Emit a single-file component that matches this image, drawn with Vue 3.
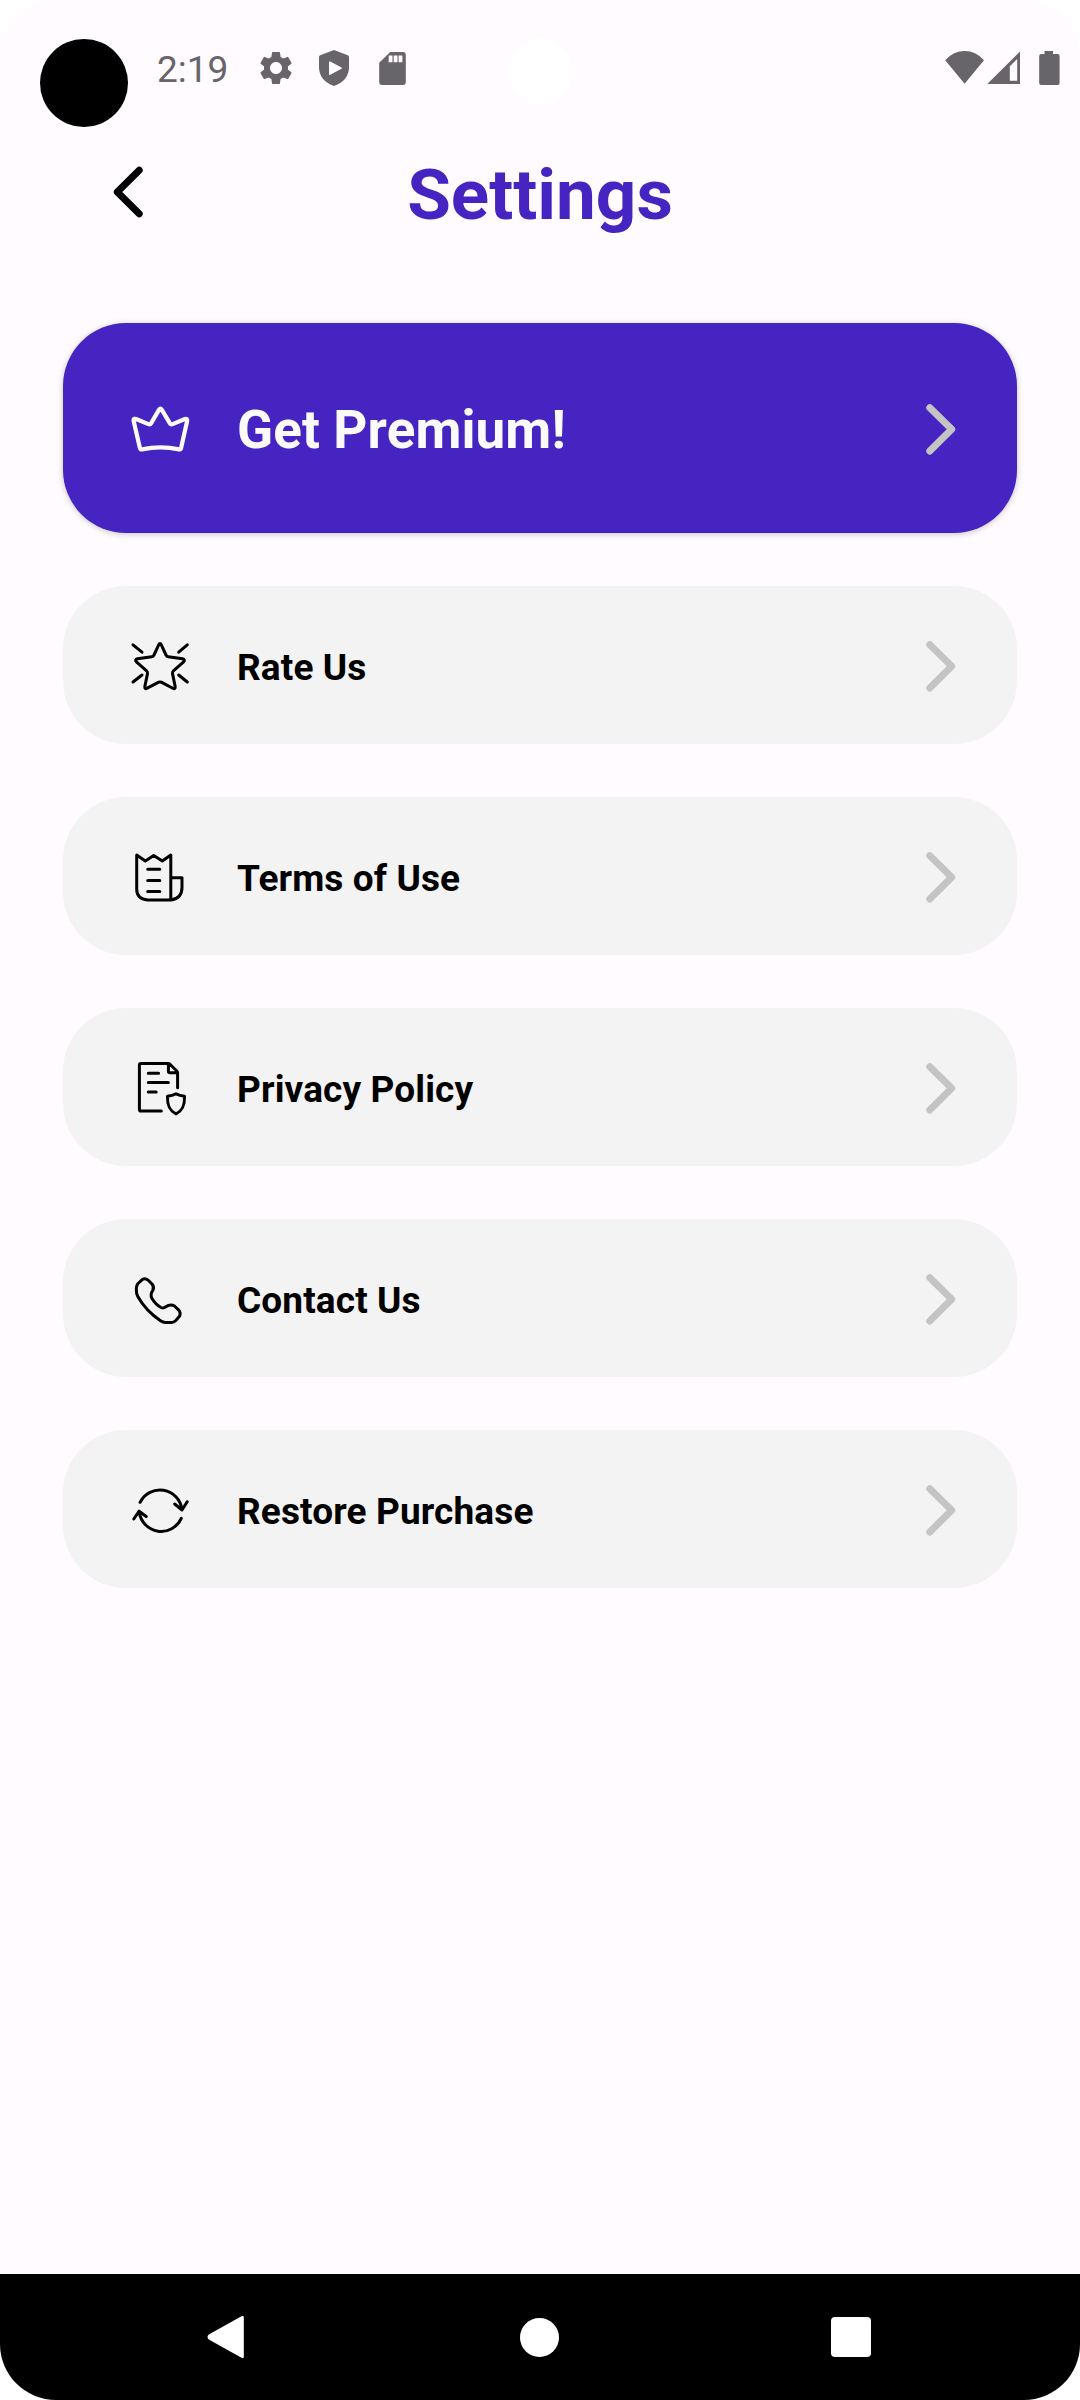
<script setup>
const items = [
  { id: 'rate', label: 'Rate Us', box: '128 633 64 64' },
  { id: 'terms', label: 'Terms of Use', box: '128 844 64 64' },
  { id: 'privacy', label: 'Privacy Policy', box: '128 1055 64 64' },
  { id: 'contact', label: 'Contact Us', box: '128 1266 64 64' },
  { id: 'restore', label: 'Restore Purchase', box: '128 1477 64 64' }
]
const shapes = {
  rate: 'M158.7 644.8Q160 642 161.3 644.8L166 655Q166.6 656.6 168.3 656.8L182.5 658.8Q185.6 659.5 183.6 661.8L173.4 670.8Q172.2 672 172.5 673.6L175.2 686.6Q175.4 689.6 172.8 688.2L161.2 682.2Q160 681.6 158.8 682.2L147.2 688.2Q144.6 689.6 144.8 686.6L147.5 673.6Q147.8 672 146.6 670.8L136.4 661.8Q134.4 659.5 137.5 658.8L151.7 656.8Q153.4 656.6 154 655ZM133 644.8L142 652.2M187.3 644.8L178.7 652.2M133 682L142 675M178.7 675L187.3 682',
  terms: 'M136.7 855L145.3 861L153.7 855.4L162.3 861L170.8 855V900H147.5Q136.7 899 136.7 889ZM170.8 900Q182 898.5 182 887.5V877.7H170.8M147.7 869.3H159.8M147.7 880.4H159.8M147.7 891.4H159.8',
  privacy: 'M161.3 1111H141Q139.4 1111 139.4 1109.4V1065.3Q139.4 1063.6 141 1063.6H168.6Q169.4 1063.6 170 1064.2L177 1071.2Q177.6 1071.8 177.6 1072.8V1087.7M168.4 1064V1071.2Q168.4 1072.7 170 1072.7H177M148.3 1073.3H158.6M148.3 1082.6H168.4M148.3 1092H156.2M176 1093.8Q179.8 1095.6 184.5 1096.3C184.8 1104 183.5 1110 176 1113.8C168.5 1110 167.2 1104 167.5 1096.3Q172.2 1095.6 176 1093.8Z',
  contact: 'M142.5 1279.3Q145.5 1278 148.3 1280.3L152 1284Q154.7 1287.3 152.7 1290.6Q149.8 1294.5 152 1298.5Q155.5 1304.5 161 1307.5Q163.5 1308.6 165.7 1306.8Q170.5 1303.5 174.5 1306L178.5 1309.8Q181 1312.5 179.7 1316L175.5 1320.8Q174 1322.4 171.5 1322.5H165.5Q163 1322.4 160.5 1320.7Q146 1311 137.8 1296.5Q136.3 1294 136.4 1291V1288Q136.4 1285.5 138 1283.5Z',
  restore: 'M140.1 1502.3A22.3 22.8 0 0 1 182 1509.5M174.7 1504L182 1510L187.2 1501.8M139.2 1512A22.2 22.8 0 0 0 181.3 1518.3M133.8 1519L139.1 1511.2L146.2 1516.5'
}
</script>

<template>
  <div class="screen">
    <span class="punch"></span>
    <span class="lens"></span>
    <div class="status">
      <span class="clock">2:19</span>
      <svg class="gear" width="40" height="40" viewBox="0 0 24 24"><path d="M19.14 12.94c.04-.3.06-.61.06-.94 0-.32-.02-.64-.07-.94l2.03-1.58c.18-.14.23-.41.12-.61l-1.92-3.32c-.12-.22-.37-.29-.59-.22l-2.39.96c-.5-.38-1.03-.7-1.62-.94l-.36-2.54c-.04-.24-.24-.41-.48-.41h-3.84c-.24 0-.43.17-.47.41l-.36 2.54c-.59.24-1.13.57-1.62.94l-2.39-.96c-.22-.08-.47 0-.59.22L2.74 8.87c-.12.21-.08.47.12.61l2.03 1.58c-.05.3-.09.63-.09.94s.02.64.07.94l-2.03 1.58c-.18.14-.23.41-.12.61l1.92 3.32c.12.22.37.29.59.22l2.39-.96c.5.38 1.03.7 1.62.94l.36 2.54c.05.24.24.41.48.41h3.84c.24 0 .44-.17.47-.41l.36-2.54c.59-.24 1.13-.56 1.62-.94l2.39.96c.22.08.47 0 .59-.22l1.92-3.32c.12-.22.07-.47-.12-.61l-2.01-1.58zM12 15.6c-1.98 0-3.6-1.62-3.6-3.6s1.62-3.6 3.6-3.6 3.6 1.62 3.6 3.6-1.62 3.6-3.6 3.6z" /></svg>
      <svg class="shield" width="30" height="36" viewBox="319 50 30 36"><path fill-rule="evenodd" d="M334 50L347.8 55.2Q349 55.7 349 57V67Q349 80.5 334 86Q319 80.5 319 67V57Q319 55.7 320.2 55.2ZM330.2 61.6Q329 61 329 62.3V74Q329 75.3 330.2 74.7L341.5 68.7Q342.6 68 341.5 67.4Z" /></svg>
      <svg class="card-icon" width="27" height="33" viewBox="378.6 51.7 27 33"><path fill-rule="evenodd" d="M389.8 51.7H402.4Q405.4 51.7 405.4 54.7V81.6Q405.4 84.6 402.4 84.6H381.8Q378.8 84.6 378.8 81.6V62.5ZM388.3 55.2V62H392.1V55.2ZM393.3 55.2V62H397.1V55.2ZM398.2 55.2V62H402V55.2Z" /></svg>
      <svg class="signals" width="116" height="36" viewBox="945 50 116 36"><path fill-rule="evenodd" d="M945.2 60.2Q953.5 51 964.6 51Q975.7 51 984 60.2L964.6 83.8ZM1020 51.5V84H987.3ZM1017.2 59V80.8H1009.8V66.3ZM1044.5 51H1053V54H1057.6Q1059.6 54 1059.6 56V83Q1059.6 85 1057.6 85H1041.2Q1039.2 85 1039.2 83V56Q1039.2 54 1041.2 54H1044.5Z" /></svg>
    </div>

    <header class="header">
      <svg class="back" width="32" height="52" viewBox="112 165.5 32 52"><path d="M139.2 169.8L117.3 191.5L139.2 213.2" /></svg>
      <h1>Settings</h1>
    </header>

    <main class="list">
      <div class="row premium">
        <svg class="icon crown" width="64" height="64" viewBox="128 396 64 64"><path d="M134.5 418.8Q133.3 419.3 133.6 420.8L139.9 448Q140.3 449.8 142 449.4Q160.5 445.2 179 449.4Q180.7 449.8 181.1 448L187.2 420.8Q187.5 418.3 185 419L172.6 424.1Q170.8 424.8 169.8 423.1L161.7 409.6Q160.4 407.7 159.1 409.6L151.2 423.1Q150.2 424.8 148.4 424.1L136 419Q135.2 418.6 134.5 418.8Z" /></svg>
        <span class="label">Get Premium!</span>
        <svg class="chevron" width="32" height="52" viewBox="925 402 32 52"><path d="M929.8 406.7L951.7 428.3L929.8 450" /></svg>
      </div>
      <div v-for="item in items" :key="item.id" class="row">
        <svg class="icon" width="64" height="64" :viewBox="item.box"><path :d="shapes[item.id]" /></svg>
        <span class="label">{{ item.label }}</span>
        <svg class="chevron" width="32" height="52" viewBox="925 402 32 52"><path d="M929.8 406.7L951.7 428.3L929.8 450" /></svg>
      </div>
    </main>

    <nav class="nav">
      <svg width="38" height="44" viewBox="207 2315 38 44"><path d="M241.5 2316.2Q243.8 2315 243.8 2317.5V2356.5Q243.8 2359 241.5 2357.8L208.8 2339.5Q206.2 2337 208.8 2334.500Z" /></svg>
      <span class="home"></span>
      <span class="recent"></span>
    </nav>
  </div>
</template>

<style>
html, body { background: #fff; }
</style>

<style scoped>
.screen {
  position: relative;
  display: flex;
  flex-direction: column;
  width: 1080px;
  height: 2400px;
  background: #fffbff;
  border-radius: 56px;
  overflow: hidden;
  font-family: Roboto, sans-serif;
  color: #000;
}
svg { display: block; flex: none; }
.punch {
  position: absolute;
  left: 40px;
  top: 39px;
  width: 88px;
  height: 88px;
  border-radius: 50%;
  background: #000;
}
.lens {
  position: absolute;
  left: 507px;
  top: 38px;
  width: 65px;
  height: 66px;
  border-radius: 50%;
  background: #fff;
}
.status {
  display: flex;
  align-items: center;
  height: 136px;
  box-sizing: border-box;
  padding: 0 19px 0 157px;
  fill: #67646a;
}
.clock {
  width: 99px;
  padding-top: 3px;
  font-size: 37px;
  line-height: 44px;
  color: #67646a;
}
.shield { margin-left: 23px; }
.card-icon { margin-left: 30px; }
.signals { margin-left: auto; }
.header {
  display: grid;
  grid-template-columns: 112px 1fr 112px;
  align-items: center;
  height: 116px;
}
.back { margin: 0 0 5px 112px; }
.back path, .chevron path {
  fill: none;
  stroke: #000;
  stroke-width: 7;
  stroke-linecap: round;
  stroke-linejoin: round;
}
h1 {
  margin: 2px 0 0;
  text-align: center;
  font-size: 71px;
  line-height: 82px;
  font-weight: 700;
  color: #4624c1;
}
.list {
  display: flex;
  flex-direction: column;
  gap: 53px;
  padding: 71px 63px 0;
}
.row {
  display: flex;
  align-items: center;
  height: 158px;
  box-sizing: border-box;
  padding: 0 60px 0 65px;
  border-radius: 63px;
  background: #f3f3f3;
}
.premium {
  height: 210px;
  background: #4624c1;
  box-shadow: 0 1px 6px rgba(0, 0, 0, 0.22);
}
.icon path {
  fill: none;
  stroke: #000;
  stroke-width: 3;
  stroke-linecap: round;
  stroke-linejoin: round;
}
.crown path { stroke: #fafafa; stroke-width: 4.2; }
.label {
  flex: 1;
  margin-left: 45px;
  padding-top: 5px;
  font-size: 37px;
  line-height: 44px;
  font-weight: 700;
  letter-spacing: 0.12px;
  white-space: nowrap;
}
.premium .label { padding-top: 4px; font-size: 53px; line-height: 62px; color: #fafafa; }
.chevron { margin-top: 1px; }
.chevron path { stroke: #c4c4c4; }
.nav {
  display: flex;
  align-items: center;
  justify-content: space-between;
  height: 126px;
  margin-top: auto;
  box-sizing: border-box;
  padding: 0 209px 0 207px;
  background: #000;
  fill: #fff;
}
.home { width: 39px; height: 39px; margin-left: 3px; border-radius: 50%; background: #fff; }
.recent { width: 40px; height: 40px; border-radius: 4px; background: #fff; }
</style>
